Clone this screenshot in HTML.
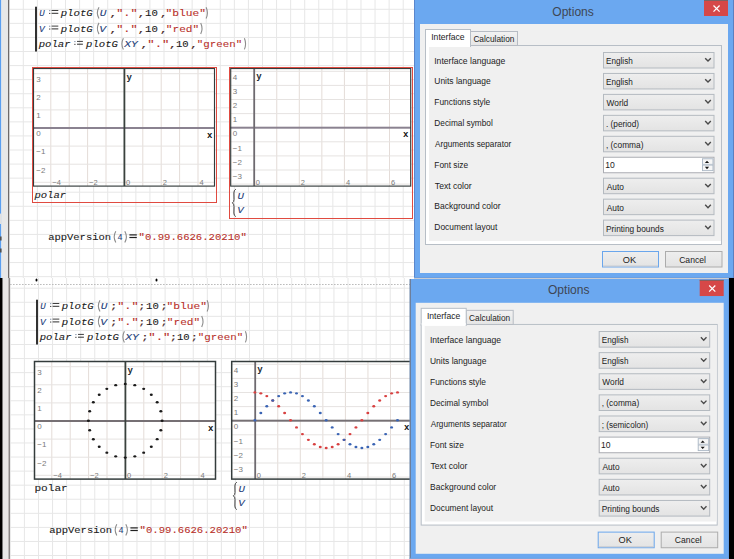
<!DOCTYPE html><html><head><meta charset="utf-8"><style>html,body{margin:0;padding:0;width:734px;height:559px;overflow:hidden;background:#fff}svg{position:absolute;left:0;top:0}</style></head><body>
<svg width="734" height="559" viewBox="0 0 734 559" style="shape-rendering:auto">
<defs><clipPath id="ctop"><rect x="0" y="0" width="734" height="278"/></clipPath><clipPath id="cbot"><rect x="0" y="278" width="734" height="281"/></clipPath></defs>
<g clip-path="url(#ctop)">
<rect x="0" y="0" width="734" height="278" fill="#fff"/>
<rect x="8.73" y="0" width="1" height="278" fill="#e7e7e7"/>
<rect x="22.80" y="0" width="1" height="278" fill="#e7e7e7"/>
<rect x="36.87" y="0" width="1" height="278" fill="#e7e7e7"/>
<rect x="50.94" y="0" width="1" height="278" fill="#e7e7e7"/>
<rect x="65.01" y="0" width="1" height="278" fill="#e7e7e7"/>
<rect x="79.08" y="0" width="1" height="278" fill="#e7e7e7"/>
<rect x="93.15" y="0" width="1" height="278" fill="#e7e7e7"/>
<rect x="107.22" y="0" width="1" height="278" fill="#e7e7e7"/>
<rect x="121.29" y="0" width="1" height="278" fill="#e7e7e7"/>
<rect x="135.36" y="0" width="1" height="278" fill="#e7e7e7"/>
<rect x="149.43" y="0" width="1" height="278" fill="#e7e7e7"/>
<rect x="163.50" y="0" width="1" height="278" fill="#e7e7e7"/>
<rect x="177.57" y="0" width="1" height="278" fill="#e7e7e7"/>
<rect x="191.64" y="0" width="1" height="278" fill="#e7e7e7"/>
<rect x="205.71" y="0" width="1" height="278" fill="#e7e7e7"/>
<rect x="219.78" y="0" width="1" height="278" fill="#e7e7e7"/>
<rect x="233.85" y="0" width="1" height="278" fill="#e7e7e7"/>
<rect x="247.92" y="0" width="1" height="278" fill="#e7e7e7"/>
<rect x="261.99" y="0" width="1" height="278" fill="#e7e7e7"/>
<rect x="276.06" y="0" width="1" height="278" fill="#e7e7e7"/>
<rect x="290.13" y="0" width="1" height="278" fill="#e7e7e7"/>
<rect x="304.20" y="0" width="1" height="278" fill="#e7e7e7"/>
<rect x="318.27" y="0" width="1" height="278" fill="#e7e7e7"/>
<rect x="332.34" y="0" width="1" height="278" fill="#e7e7e7"/>
<rect x="346.41" y="0" width="1" height="278" fill="#e7e7e7"/>
<rect x="360.48" y="0" width="1" height="278" fill="#e7e7e7"/>
<rect x="374.55" y="0" width="1" height="278" fill="#e7e7e7"/>
<rect x="388.62" y="0" width="1" height="278" fill="#e7e7e7"/>
<rect x="402.69" y="0" width="1" height="278" fill="#e7e7e7"/>
<rect x="416.76" y="0" width="1" height="278" fill="#e7e7e7"/>
<rect x="430.83" y="0" width="1" height="278" fill="#e7e7e7"/>
<rect x="444.90" y="0" width="1" height="278" fill="#e7e7e7"/>
<rect x="458.97" y="0" width="1" height="278" fill="#e7e7e7"/>
<rect x="473.04" y="0" width="1" height="278" fill="#e7e7e7"/>
<rect x="487.11" y="0" width="1" height="278" fill="#e7e7e7"/>
<rect x="501.18" y="0" width="1" height="278" fill="#e7e7e7"/>
<rect x="515.25" y="0" width="1" height="278" fill="#e7e7e7"/>
<rect x="529.32" y="0" width="1" height="278" fill="#e7e7e7"/>
<rect x="543.39" y="0" width="1" height="278" fill="#e7e7e7"/>
<rect x="557.46" y="0" width="1" height="278" fill="#e7e7e7"/>
<rect x="571.53" y="0" width="1" height="278" fill="#e7e7e7"/>
<rect x="585.60" y="0" width="1" height="278" fill="#e7e7e7"/>
<rect x="599.67" y="0" width="1" height="278" fill="#e7e7e7"/>
<rect x="613.74" y="0" width="1" height="278" fill="#e7e7e7"/>
<rect x="627.81" y="0" width="1" height="278" fill="#e7e7e7"/>
<rect x="641.88" y="0" width="1" height="278" fill="#e7e7e7"/>
<rect x="655.95" y="0" width="1" height="278" fill="#e7e7e7"/>
<rect x="670.02" y="0" width="1" height="278" fill="#e7e7e7"/>
<rect x="684.09" y="0" width="1" height="278" fill="#e7e7e7"/>
<rect x="698.16" y="0" width="1" height="278" fill="#e7e7e7"/>
<rect x="712.23" y="0" width="1" height="278" fill="#e7e7e7"/>
<rect x="726.30" y="0" width="1" height="278" fill="#e7e7e7"/>
<rect x="9" y="8.80" width="725" height="1" fill="#e7e7e7"/>
<rect x="9" y="22.87" width="725" height="1" fill="#e7e7e7"/>
<rect x="9" y="36.94" width="725" height="1" fill="#e7e7e7"/>
<rect x="9" y="51.01" width="725" height="1" fill="#e7e7e7"/>
<rect x="9" y="65.08" width="725" height="1" fill="#e7e7e7"/>
<rect x="9" y="79.15" width="725" height="1" fill="#e7e7e7"/>
<rect x="9" y="93.22" width="725" height="1" fill="#e7e7e7"/>
<rect x="9" y="107.29" width="725" height="1" fill="#e7e7e7"/>
<rect x="9" y="121.36" width="725" height="1" fill="#e7e7e7"/>
<rect x="9" y="135.43" width="725" height="1" fill="#e7e7e7"/>
<rect x="9" y="149.50" width="725" height="1" fill="#e7e7e7"/>
<rect x="9" y="163.57" width="725" height="1" fill="#e7e7e7"/>
<rect x="9" y="177.64" width="725" height="1" fill="#e7e7e7"/>
<rect x="9" y="191.71" width="725" height="1" fill="#e7e7e7"/>
<rect x="9" y="205.78" width="725" height="1" fill="#e7e7e7"/>
<rect x="9" y="219.85" width="725" height="1" fill="#e7e7e7"/>
<rect x="9" y="233.92" width="725" height="1" fill="#e7e7e7"/>
<rect x="9" y="247.99" width="725" height="1" fill="#e7e7e7"/>
<rect x="9" y="262.06" width="725" height="1" fill="#e7e7e7"/>
<rect x="9" y="276.13" width="725" height="1" fill="#e7e7e7"/>
<rect x="0" y="0" width="1.4" height="278" fill="#5b9ff0"/><rect x="1.4" y="0" width="6.6" height="278" fill="#e8e8e8"/><rect x="8" y="0" width="1.2" height="278" fill="#6e6a6a"/>
<rect x="0" y="213.6" width="1.4" height="10.4" fill="#e0e0e0"/><rect x="0" y="236.5" width="1.6" height="4" fill="#505050"/><rect x="0" y="248.5" width="1.6" height="4" fill="#505050"/>
<rect x="35.2" y="6.7" width="1.6" height="44.8" fill="#000"/>
<text x="39.24" y="15.90" font-family="Liberation Mono" font-size="8.8" fill="#24407a" font-style="italic" stroke="#24407a" stroke-width="0.08" textLength="5.47" lengthAdjust="spacingAndGlyphs">U</text>
<rect x="49.10" y="10.10" width="1.2" height="1.1" fill="#8090a8"/><rect x="49.10" y="12.90" width="1.2" height="1.1" fill="#404040"/>
<rect x="51.60" y="10.00" width="6.70" height="1.0" fill="#404040"/><rect x="51.60" y="12.80" width="6.70" height="1.0" fill="#303030"/>
<text x="60.70" y="15.90" font-family="Liberation Mono" font-size="8.8" fill="#202020" font-style="italic" stroke="#202020" stroke-width="0.08" textLength="32.12" lengthAdjust="spacingAndGlyphs">plotG</text>
<path d="M99.00 7.30 Q95.70 12.90 99.00 18.50" fill="none" stroke="#8c8c8c" stroke-width="1.1"/>
<text x="99.75" y="15.90" font-family="Liberation Mono" font-size="8.8" fill="#24407a" font-style="italic" stroke="#24407a" stroke-width="0.08" textLength="6.64" lengthAdjust="spacingAndGlyphs">U</text>
<text x="109.18" y="15.90" font-family="Liberation Mono" font-size="8.8" fill="#4a2a2a" stroke="#4a2a2a" stroke-width="0.08" textLength="8.40" lengthAdjust="spacingAndGlyphs">,</text>
<text x="116.23" y="15.90" font-family="Liberation Mono" font-size="8.8" fill="#b8302a" stroke="#b8302a" stroke-width="0.08" textLength="21.44" lengthAdjust="spacingAndGlyphs">"."</text>
<text x="137.55" y="15.90" font-family="Liberation Mono" font-size="8.8" fill="#4a2a2a" stroke="#4a2a2a" stroke-width="0.08" textLength="8.10" lengthAdjust="spacingAndGlyphs">,</text>
<text x="145.05" y="15.90" font-family="Liberation Mono" font-size="8.8" fill="#202020" stroke="#202020" stroke-width="0.08" textLength="12.79" lengthAdjust="spacingAndGlyphs">10</text>
<text x="159.75" y="15.90" font-family="Liberation Mono" font-size="8.8" fill="#4a2a2a" stroke="#4a2a2a" stroke-width="0.08" textLength="8.10" lengthAdjust="spacingAndGlyphs">,</text>
<text x="165.63" y="15.90" font-family="Liberation Mono" font-size="8.8" fill="#b8302a" stroke="#b8302a" stroke-width="0.08" textLength="40.34" lengthAdjust="spacingAndGlyphs">"blue"</text>
<path d="M206.10 7.30 Q208.70 12.90 206.10 18.50" fill="none" stroke="#8c8c8c" stroke-width="1.1"/>
<text x="38.94" y="31.50" font-family="Liberation Mono" font-size="8.8" fill="#24407a" font-style="italic" stroke="#24407a" stroke-width="0.08" textLength="5.70" lengthAdjust="spacingAndGlyphs">V</text>
<rect x="49.10" y="25.70" width="1.2" height="1.1" fill="#8090a8"/><rect x="49.10" y="28.50" width="1.2" height="1.1" fill="#404040"/>
<rect x="51.60" y="25.60" width="6.70" height="1.0" fill="#404040"/><rect x="51.60" y="28.40" width="6.70" height="1.0" fill="#303030"/>
<text x="60.70" y="31.50" font-family="Liberation Mono" font-size="8.8" fill="#202020" font-style="italic" stroke="#202020" stroke-width="0.08" textLength="32.12" lengthAdjust="spacingAndGlyphs">plotG</text>
<path d="M99.00 22.90 Q95.70 28.50 99.00 34.10" fill="none" stroke="#8c8c8c" stroke-width="1.1"/>
<text x="99.39" y="31.50" font-family="Liberation Mono" font-size="8.8" fill="#24407a" font-style="italic" stroke="#24407a" stroke-width="0.08" textLength="6.82" lengthAdjust="spacingAndGlyphs">V</text>
<text x="109.18" y="31.50" font-family="Liberation Mono" font-size="8.8" fill="#4a2a2a" stroke="#4a2a2a" stroke-width="0.08" textLength="8.40" lengthAdjust="spacingAndGlyphs">,</text>
<text x="116.23" y="31.50" font-family="Liberation Mono" font-size="8.8" fill="#b8302a" stroke="#b8302a" stroke-width="0.08" textLength="21.44" lengthAdjust="spacingAndGlyphs">"."</text>
<text x="137.55" y="31.50" font-family="Liberation Mono" font-size="8.8" fill="#4a2a2a" stroke="#4a2a2a" stroke-width="0.08" textLength="8.10" lengthAdjust="spacingAndGlyphs">,</text>
<text x="145.05" y="31.50" font-family="Liberation Mono" font-size="8.8" fill="#202020" stroke="#202020" stroke-width="0.08" textLength="12.79" lengthAdjust="spacingAndGlyphs">10</text>
<text x="159.75" y="31.50" font-family="Liberation Mono" font-size="8.8" fill="#4a2a2a" stroke="#4a2a2a" stroke-width="0.08" textLength="8.10" lengthAdjust="spacingAndGlyphs">,</text>
<text x="165.84" y="31.50" font-family="Liberation Mono" font-size="8.8" fill="#b8302a" stroke="#b8302a" stroke-width="0.08" textLength="33.43" lengthAdjust="spacingAndGlyphs">"red"</text>
<path d="M200.70 22.90 Q203.30 28.50 200.70 34.10" fill="none" stroke="#8c8c8c" stroke-width="1.1"/>
<text x="38.70" y="46.80" font-family="Liberation Mono" font-size="8.8" fill="#202020" font-style="italic" stroke="#202020" stroke-width="0.08" textLength="31.93" lengthAdjust="spacingAndGlyphs">polar</text>
<rect x="74.30" y="41.00" width="1.2" height="1.1" fill="#8090a8"/><rect x="74.30" y="43.80" width="1.2" height="1.1" fill="#404040"/>
<rect x="77.00" y="40.90" width="5.90" height="1.0" fill="#404040"/><rect x="77.00" y="43.70" width="5.90" height="1.0" fill="#303030"/>
<text x="86.00" y="46.80" font-family="Liberation Mono" font-size="8.8" fill="#202020" font-style="italic" stroke="#202020" stroke-width="0.08" textLength="31.92" lengthAdjust="spacingAndGlyphs">plotG</text>
<path d="M123.40 38.20 Q120.40 43.80 123.40 49.40" fill="none" stroke="#8c8c8c" stroke-width="1.1"/>
<text x="124.34" y="46.80" font-family="Liberation Mono" font-size="8.8" fill="#24407a" font-style="italic" stroke="#24407a" stroke-width="0.08" textLength="13.50" lengthAdjust="spacingAndGlyphs">XY</text>
<text x="140.38" y="46.80" font-family="Liberation Mono" font-size="8.8" fill="#4a2a2a" stroke="#4a2a2a" stroke-width="0.08" textLength="8.40" lengthAdjust="spacingAndGlyphs">,</text>
<text x="147.28" y="46.80" font-family="Liberation Mono" font-size="8.8" fill="#b8302a" stroke="#b8302a" stroke-width="0.08" textLength="22.15" lengthAdjust="spacingAndGlyphs">"."</text>
<text x="168.88" y="46.80" font-family="Liberation Mono" font-size="8.8" fill="#4a2a2a" stroke="#4a2a2a" stroke-width="0.08" textLength="8.40" lengthAdjust="spacingAndGlyphs">,</text>
<text x="175.96" y="46.80" font-family="Liberation Mono" font-size="8.8" fill="#202020" stroke="#202020" stroke-width="0.08" textLength="12.68" lengthAdjust="spacingAndGlyphs">10</text>
<text x="189.94" y="46.80" font-family="Liberation Mono" font-size="8.8" fill="#4a2a2a" stroke="#4a2a2a" stroke-width="0.08" textLength="8.10" lengthAdjust="spacingAndGlyphs">,</text>
<text x="196.89" y="46.80" font-family="Liberation Mono" font-size="8.8" fill="#b8302a" stroke="#b8302a" stroke-width="0.08" textLength="45.33" lengthAdjust="spacingAndGlyphs">"green"</text>
<path d="M244.40 38.20 Q246.70 43.80 244.40 49.40" fill="none" stroke="#8c8c8c" stroke-width="1.1"/>
<rect x="33" y="68" width="182" height="118" fill="#fff"/>
<rect x="50.30" y="68" width="1" height="118" fill="#e4dcd8"/>
<rect x="68.70" y="68" width="1" height="118" fill="#e4dcd8"/>
<rect x="87.10" y="68" width="1" height="118" fill="#e4dcd8"/>
<rect x="105.50" y="68" width="1" height="118" fill="#e4dcd8"/>
<rect x="142.30" y="68" width="1" height="118" fill="#e4dcd8"/>
<rect x="160.70" y="68" width="1" height="118" fill="#e4dcd8"/>
<rect x="179.10" y="68" width="1" height="118" fill="#e4dcd8"/>
<rect x="197.50" y="68" width="1" height="118" fill="#e4dcd8"/>
<rect x="33" y="73.20" width="182" height="1" fill="#e6e3e1"/>
<rect x="33" y="91.30" width="182" height="1" fill="#e6e3e1"/>
<rect x="33" y="109.40" width="182" height="1" fill="#e6e3e1"/>
<rect x="33" y="145.60" width="182" height="1" fill="#e6e3e1"/>
<rect x="33" y="163.70" width="182" height="1" fill="#e6e3e1"/>
<rect x="33" y="181.80" width="182" height="1" fill="#e6e3e1"/>
<rect x="33" y="127.00" width="182" height="2" fill="#8a8290"/>
<rect x="123.50" y="68" width="1.8" height="118" fill="#3a423e"/>
<text x="36.3" y="81.99999999999999" font-family="Liberation Sans" font-size="8" fill="#7a7a7a">3</text>
<text x="36.3" y="100.1" font-family="Liberation Sans" font-size="8" fill="#7a7a7a">2</text>
<text x="36.3" y="118.2" font-family="Liberation Sans" font-size="8" fill="#7a7a7a">1</text>
<text x="36.3" y="136.3" font-family="Liberation Sans" font-size="8" fill="#7a7a7a">0</text>
<text x="36.3" y="154.4" font-family="Liberation Sans" font-size="8" fill="#7a7a7a">−1</text>
<text x="36.3" y="172.5" font-family="Liberation Sans" font-size="8" fill="#7a7a7a">−2</text>
<text x="52.30000000000001" y="185" font-family="Liberation Sans" font-size="7.5" fill="#7a7a7a">−4</text>
<text x="89.10000000000001" y="185" font-family="Liberation Sans" font-size="7.5" fill="#7a7a7a">−2</text>
<text x="125.9" y="185" font-family="Liberation Sans" font-size="7.5" fill="#7a7a7a">0</text>
<text x="162.7" y="185" font-family="Liberation Sans" font-size="7.5" fill="#7a7a7a">2</text>
<text x="199.5" y="185" font-family="Liberation Sans" font-size="7.5" fill="#7a7a7a">4</text>
<text x="126.4" y="80" font-family="Liberation Mono" font-size="9" fill="#202830" font-weight="bold">y</text>
<text x="207" y="137.5" font-family="Liberation Mono" font-size="9" fill="#101010" font-weight="bold">x</text>
<rect x="33.5" y="68.5" width="181" height="117.6" fill="none" stroke="#343c3c" stroke-width="1.15"/>
<rect x="230" y="68" width="181" height="118" fill="#fff"/>
<rect x="276.25" y="68" width="1" height="118" fill="#e4dcd8"/>
<rect x="298.80" y="68" width="1" height="118" fill="#e4dcd8"/>
<rect x="321.35" y="68" width="1" height="118" fill="#e4dcd8"/>
<rect x="343.90" y="68" width="1" height="118" fill="#e4dcd8"/>
<rect x="366.45" y="68" width="1" height="118" fill="#e4dcd8"/>
<rect x="389.00" y="68" width="1" height="118" fill="#e4dcd8"/>
<rect x="230" y="70.80" width="181" height="1" fill="#e6e3e1"/>
<rect x="230" y="84.90" width="181" height="1" fill="#e6e3e1"/>
<rect x="230" y="99.00" width="181" height="1" fill="#e6e3e1"/>
<rect x="230" y="113.10" width="181" height="1" fill="#e6e3e1"/>
<rect x="230" y="141.30" width="181" height="1" fill="#e6e3e1"/>
<rect x="230" y="155.40" width="181" height="1" fill="#e6e3e1"/>
<rect x="230" y="169.50" width="181" height="1" fill="#e6e3e1"/>
<rect x="230" y="183.60" width="181" height="1" fill="#e6e3e1"/>
<rect x="230" y="126.70" width="181" height="2" fill="#8a8290"/>
<rect x="253.30" y="68" width="1.8" height="118" fill="#6e6a70"/>
<text x="232.8" y="80.00000000000001" font-family="Liberation Sans" font-size="8" fill="#7a7a7a">4</text>
<text x="232.8" y="94.10000000000001" font-family="Liberation Sans" font-size="8" fill="#7a7a7a">3</text>
<text x="232.8" y="108.2" font-family="Liberation Sans" font-size="8" fill="#7a7a7a">2</text>
<text x="232.8" y="122.30000000000001" font-family="Liberation Sans" font-size="8" fill="#7a7a7a">1</text>
<text x="232.8" y="136.4" font-family="Liberation Sans" font-size="8" fill="#7a7a7a">0</text>
<text x="232.8" y="150.5" font-family="Liberation Sans" font-size="8" fill="#7a7a7a">−1</text>
<text x="232.8" y="164.6" font-family="Liberation Sans" font-size="8" fill="#7a7a7a">−2</text>
<text x="232.8" y="178.7" font-family="Liberation Sans" font-size="8" fill="#7a7a7a">−3</text>
<text x="255.7" y="184.5" font-family="Liberation Sans" font-size="7.5" fill="#7a7a7a">0</text>
<text x="300.8" y="184.5" font-family="Liberation Sans" font-size="7.5" fill="#7a7a7a">2</text>
<text x="345.9" y="184.5" font-family="Liberation Sans" font-size="7.5" fill="#7a7a7a">4</text>
<text x="391.0" y="184.5" font-family="Liberation Sans" font-size="7.5" fill="#7a7a7a">6</text>
<text x="256.2" y="79" font-family="Liberation Mono" font-size="9" fill="#202830" font-weight="bold">y</text>
<text x="403" y="137.2" font-family="Liberation Mono" font-size="9" fill="#101010" font-weight="bold">x</text>
<rect x="230.7" y="68.5" width="180" height="117.6" fill="none" stroke="#343c3c" stroke-width="1.15"/>
<rect x="32.5" y="67.5" width="184" height="135" fill="none" stroke="#e04a40" stroke-width="1"/>
<rect x="229.5" y="67.5" width="183" height="151" fill="none" stroke="#e04a40" stroke-width="1"/>
<text x="34.40" y="198.00" font-family="Liberation Mono" font-size="8.8" fill="#202020" font-style="italic" stroke="#202020" stroke-width="0.08" textLength="31.83" lengthAdjust="spacingAndGlyphs">polar</text>
<path transform="translate(0,0)" d="M235.8 189.2 Q233.8 190.2 233.9 193 L234 199.5 Q234 202 232.4 202.9 Q234 203.8 234 206.3 L233.9 213 Q233.8 215.6 235.8 216.6" fill="none" stroke="#3a3a3a" stroke-width="1"/>
<text x="237.46" y="198.50" font-family="Liberation Mono" font-size="8.8" fill="#24407a" font-style="italic" stroke="#24407a" stroke-width="0.08" textLength="6.43" lengthAdjust="spacingAndGlyphs">U</text>
<text x="237.15" y="212.50" font-family="Liberation Mono" font-size="8.8" fill="#24407a" font-style="italic" stroke="#24407a" stroke-width="0.08" textLength="6.41" lengthAdjust="spacingAndGlyphs">V</text>
<text x="48.17" y="239.70" font-family="Liberation Mono" font-size="8.8" fill="#202020" stroke="#202020" stroke-width="0.08" textLength="62.88" lengthAdjust="spacingAndGlyphs">appVersion</text>
<path d="M115.80 231.20 Q112.60 236.80 115.80 242.40" fill="none" stroke="#8c8c8c" stroke-width="1.1"/>
<text x="117.58" y="239.70" font-family="Liberation Mono" font-size="8.8" fill="#24407a" stroke="#24407a" stroke-width="0.08" textLength="5.04" lengthAdjust="spacingAndGlyphs">4</text>
<path d="M124.80 231.20 Q128.00 236.80 124.80 242.40" fill="none" stroke="#8c8c8c" stroke-width="1.1"/>
<rect x="129.40" y="234.30" width="7.4" height="1.2" fill="#202020"/><rect x="129.40" y="236.90" width="7.4" height="1.2" fill="#202020"/>
<text x="138.62" y="239.70" font-family="Liberation Mono" font-size="8.8" fill="#b8302a" stroke="#b8302a" stroke-width="0.08" textLength="108.18" lengthAdjust="spacingAndGlyphs">"0.99.6626.20210"</text>
</g>
<g clip-path="url(#cbot)">
<rect x="0" y="278" width="734" height="281" fill="#fff"/>
<rect x="9.83" y="278" width="1" height="281" fill="#e7e7e7"/>
<rect x="23.90" y="278" width="1" height="281" fill="#e7e7e7"/>
<rect x="37.97" y="278" width="1" height="281" fill="#e7e7e7"/>
<rect x="52.04" y="278" width="1" height="281" fill="#e7e7e7"/>
<rect x="66.11" y="278" width="1" height="281" fill="#e7e7e7"/>
<rect x="80.18" y="278" width="1" height="281" fill="#e7e7e7"/>
<rect x="94.25" y="278" width="1" height="281" fill="#e7e7e7"/>
<rect x="108.32" y="278" width="1" height="281" fill="#e7e7e7"/>
<rect x="122.39" y="278" width="1" height="281" fill="#e7e7e7"/>
<rect x="136.46" y="278" width="1" height="281" fill="#e7e7e7"/>
<rect x="150.53" y="278" width="1" height="281" fill="#e7e7e7"/>
<rect x="164.60" y="278" width="1" height="281" fill="#e7e7e7"/>
<rect x="178.67" y="278" width="1" height="281" fill="#e7e7e7"/>
<rect x="192.74" y="278" width="1" height="281" fill="#e7e7e7"/>
<rect x="206.81" y="278" width="1" height="281" fill="#e7e7e7"/>
<rect x="220.88" y="278" width="1" height="281" fill="#e7e7e7"/>
<rect x="234.95" y="278" width="1" height="281" fill="#e7e7e7"/>
<rect x="249.02" y="278" width="1" height="281" fill="#e7e7e7"/>
<rect x="263.09" y="278" width="1" height="281" fill="#e7e7e7"/>
<rect x="277.16" y="278" width="1" height="281" fill="#e7e7e7"/>
<rect x="291.23" y="278" width="1" height="281" fill="#e7e7e7"/>
<rect x="305.30" y="278" width="1" height="281" fill="#e7e7e7"/>
<rect x="319.37" y="278" width="1" height="281" fill="#e7e7e7"/>
<rect x="333.44" y="278" width="1" height="281" fill="#e7e7e7"/>
<rect x="347.51" y="278" width="1" height="281" fill="#e7e7e7"/>
<rect x="361.58" y="278" width="1" height="281" fill="#e7e7e7"/>
<rect x="375.65" y="278" width="1" height="281" fill="#e7e7e7"/>
<rect x="389.72" y="278" width="1" height="281" fill="#e7e7e7"/>
<rect x="403.79" y="278" width="1" height="281" fill="#e7e7e7"/>
<rect x="417.86" y="278" width="1" height="281" fill="#e7e7e7"/>
<rect x="431.93" y="278" width="1" height="281" fill="#e7e7e7"/>
<rect x="446.00" y="278" width="1" height="281" fill="#e7e7e7"/>
<rect x="460.07" y="278" width="1" height="281" fill="#e7e7e7"/>
<rect x="474.14" y="278" width="1" height="281" fill="#e7e7e7"/>
<rect x="488.21" y="278" width="1" height="281" fill="#e7e7e7"/>
<rect x="502.28" y="278" width="1" height="281" fill="#e7e7e7"/>
<rect x="516.35" y="278" width="1" height="281" fill="#e7e7e7"/>
<rect x="530.42" y="278" width="1" height="281" fill="#e7e7e7"/>
<rect x="544.49" y="278" width="1" height="281" fill="#e7e7e7"/>
<rect x="558.56" y="278" width="1" height="281" fill="#e7e7e7"/>
<rect x="572.63" y="278" width="1" height="281" fill="#e7e7e7"/>
<rect x="586.70" y="278" width="1" height="281" fill="#e7e7e7"/>
<rect x="600.77" y="278" width="1" height="281" fill="#e7e7e7"/>
<rect x="614.84" y="278" width="1" height="281" fill="#e7e7e7"/>
<rect x="628.91" y="278" width="1" height="281" fill="#e7e7e7"/>
<rect x="642.98" y="278" width="1" height="281" fill="#e7e7e7"/>
<rect x="657.05" y="278" width="1" height="281" fill="#e7e7e7"/>
<rect x="671.12" y="278" width="1" height="281" fill="#e7e7e7"/>
<rect x="685.19" y="278" width="1" height="281" fill="#e7e7e7"/>
<rect x="699.26" y="278" width="1" height="281" fill="#e7e7e7"/>
<rect x="713.33" y="278" width="1" height="281" fill="#e7e7e7"/>
<rect x="727.40" y="278" width="1" height="281" fill="#e7e7e7"/>
<rect x="10" y="287.70" width="724" height="1" fill="#e7e7e7"/>
<rect x="10" y="301.77" width="724" height="1" fill="#e7e7e7"/>
<rect x="10" y="315.84" width="724" height="1" fill="#e7e7e7"/>
<rect x="10" y="329.91" width="724" height="1" fill="#e7e7e7"/>
<rect x="10" y="343.98" width="724" height="1" fill="#e7e7e7"/>
<rect x="10" y="358.05" width="724" height="1" fill="#e7e7e7"/>
<rect x="10" y="372.12" width="724" height="1" fill="#e7e7e7"/>
<rect x="10" y="386.19" width="724" height="1" fill="#e7e7e7"/>
<rect x="10" y="400.26" width="724" height="1" fill="#e7e7e7"/>
<rect x="10" y="414.33" width="724" height="1" fill="#e7e7e7"/>
<rect x="10" y="428.40" width="724" height="1" fill="#e7e7e7"/>
<rect x="10" y="442.47" width="724" height="1" fill="#e7e7e7"/>
<rect x="10" y="456.54" width="724" height="1" fill="#e7e7e7"/>
<rect x="10" y="470.61" width="724" height="1" fill="#e7e7e7"/>
<rect x="10" y="484.68" width="724" height="1" fill="#e7e7e7"/>
<rect x="10" y="498.75" width="724" height="1" fill="#e7e7e7"/>
<rect x="10" y="512.82" width="724" height="1" fill="#e7e7e7"/>
<rect x="10" y="526.89" width="724" height="1" fill="#e7e7e7"/>
<rect x="10" y="540.96" width="724" height="1" fill="#e7e7e7"/>
<rect x="10" y="555.03" width="724" height="1" fill="#e7e7e7"/>
<rect x="0" y="278" width="2.7" height="281" fill="#000"/><rect x="2.7" y="278" width="5.9" height="281" fill="#e8e8e8"/><rect x="8.6" y="278" width="1.2" height="281" fill="#6e6a6a"/>
<line x1="10" y1="284.5" x2="734" y2="284.5" stroke="#bcbcbc" stroke-width="1" stroke-dasharray="1.6 1.4"/>
<ellipse cx="36.5" cy="280" rx="1" ry="1.5" fill="#000"/><ellipse cx="156.5" cy="280" rx="1" ry="1.5" fill="#000"/>
<rect x="36.2" y="299.7" width="1.6" height="44.8" fill="#000"/>
<text x="40.24" y="308.90" font-family="Liberation Mono" font-size="8.8" fill="#24407a" font-style="italic" stroke="#24407a" stroke-width="0.08" textLength="5.47" lengthAdjust="spacingAndGlyphs">U</text>
<rect x="50.10" y="303.10" width="1.2" height="1.1" fill="#8090a8"/><rect x="50.10" y="305.90" width="1.2" height="1.1" fill="#404040"/>
<rect x="52.60" y="303.00" width="6.70" height="1.0" fill="#404040"/><rect x="52.60" y="305.80" width="6.70" height="1.0" fill="#303030"/>
<text x="61.70" y="308.90" font-family="Liberation Mono" font-size="8.8" fill="#202020" font-style="italic" stroke="#202020" stroke-width="0.08" textLength="32.12" lengthAdjust="spacingAndGlyphs">plotG</text>
<path d="M100.00 300.30 Q96.70 305.90 100.00 311.50" fill="none" stroke="#8c8c8c" stroke-width="1.1"/>
<text x="100.75" y="308.90" font-family="Liberation Mono" font-size="8.8" fill="#24407a" font-style="italic" stroke="#24407a" stroke-width="0.08" textLength="6.64" lengthAdjust="spacingAndGlyphs">U</text>
<text x="109.73" y="308.90" font-family="Liberation Mono" font-size="8.8" fill="#4a2a2a" stroke="#4a2a2a" stroke-width="0.08" textLength="8.00" lengthAdjust="spacingAndGlyphs">;</text>
<text x="117.23" y="308.90" font-family="Liberation Mono" font-size="8.8" fill="#b8302a" stroke="#b8302a" stroke-width="0.08" textLength="21.44" lengthAdjust="spacingAndGlyphs">"."</text>
<text x="138.11" y="308.90" font-family="Liberation Mono" font-size="8.8" fill="#4a2a2a" stroke="#4a2a2a" stroke-width="0.08" textLength="7.72" lengthAdjust="spacingAndGlyphs">;</text>
<text x="146.05" y="308.90" font-family="Liberation Mono" font-size="8.8" fill="#202020" stroke="#202020" stroke-width="0.08" textLength="12.79" lengthAdjust="spacingAndGlyphs">10</text>
<text x="160.31" y="308.90" font-family="Liberation Mono" font-size="8.8" fill="#4a2a2a" stroke="#4a2a2a" stroke-width="0.08" textLength="7.72" lengthAdjust="spacingAndGlyphs">;</text>
<text x="166.63" y="308.90" font-family="Liberation Mono" font-size="8.8" fill="#b8302a" stroke="#b8302a" stroke-width="0.08" textLength="40.34" lengthAdjust="spacingAndGlyphs">"blue"</text>
<path d="M207.10 300.30 Q209.70 305.90 207.10 311.50" fill="none" stroke="#8c8c8c" stroke-width="1.1"/>
<text x="39.94" y="324.50" font-family="Liberation Mono" font-size="8.8" fill="#24407a" font-style="italic" stroke="#24407a" stroke-width="0.08" textLength="5.70" lengthAdjust="spacingAndGlyphs">V</text>
<rect x="50.10" y="318.70" width="1.2" height="1.1" fill="#8090a8"/><rect x="50.10" y="321.50" width="1.2" height="1.1" fill="#404040"/>
<rect x="52.60" y="318.60" width="6.70" height="1.0" fill="#404040"/><rect x="52.60" y="321.40" width="6.70" height="1.0" fill="#303030"/>
<text x="61.70" y="324.50" font-family="Liberation Mono" font-size="8.8" fill="#202020" font-style="italic" stroke="#202020" stroke-width="0.08" textLength="32.12" lengthAdjust="spacingAndGlyphs">plotG</text>
<path d="M100.00 315.90 Q96.70 321.50 100.00 327.10" fill="none" stroke="#8c8c8c" stroke-width="1.1"/>
<text x="100.39" y="324.50" font-family="Liberation Mono" font-size="8.8" fill="#24407a" font-style="italic" stroke="#24407a" stroke-width="0.08" textLength="6.82" lengthAdjust="spacingAndGlyphs">V</text>
<text x="109.73" y="324.50" font-family="Liberation Mono" font-size="8.8" fill="#4a2a2a" stroke="#4a2a2a" stroke-width="0.08" textLength="8.00" lengthAdjust="spacingAndGlyphs">;</text>
<text x="117.23" y="324.50" font-family="Liberation Mono" font-size="8.8" fill="#b8302a" stroke="#b8302a" stroke-width="0.08" textLength="21.44" lengthAdjust="spacingAndGlyphs">"."</text>
<text x="138.11" y="324.50" font-family="Liberation Mono" font-size="8.8" fill="#4a2a2a" stroke="#4a2a2a" stroke-width="0.08" textLength="7.72" lengthAdjust="spacingAndGlyphs">;</text>
<text x="146.05" y="324.50" font-family="Liberation Mono" font-size="8.8" fill="#202020" stroke="#202020" stroke-width="0.08" textLength="12.79" lengthAdjust="spacingAndGlyphs">10</text>
<text x="160.31" y="324.50" font-family="Liberation Mono" font-size="8.8" fill="#4a2a2a" stroke="#4a2a2a" stroke-width="0.08" textLength="7.72" lengthAdjust="spacingAndGlyphs">;</text>
<text x="166.84" y="324.50" font-family="Liberation Mono" font-size="8.8" fill="#b8302a" stroke="#b8302a" stroke-width="0.08" textLength="33.43" lengthAdjust="spacingAndGlyphs">"red"</text>
<path d="M201.70 315.90 Q204.30 321.50 201.70 327.10" fill="none" stroke="#8c8c8c" stroke-width="1.1"/>
<text x="39.70" y="339.80" font-family="Liberation Mono" font-size="8.8" fill="#202020" font-style="italic" stroke="#202020" stroke-width="0.08" textLength="31.93" lengthAdjust="spacingAndGlyphs">polar</text>
<rect x="75.30" y="334.00" width="1.2" height="1.1" fill="#8090a8"/><rect x="75.30" y="336.80" width="1.2" height="1.1" fill="#404040"/>
<rect x="78.00" y="333.90" width="5.90" height="1.0" fill="#404040"/><rect x="78.00" y="336.70" width="5.90" height="1.0" fill="#303030"/>
<text x="87.00" y="339.80" font-family="Liberation Mono" font-size="8.8" fill="#202020" font-style="italic" stroke="#202020" stroke-width="0.08" textLength="31.92" lengthAdjust="spacingAndGlyphs">plotG</text>
<path d="M124.40 331.20 Q121.40 336.80 124.40 342.40" fill="none" stroke="#8c8c8c" stroke-width="1.1"/>
<text x="125.34" y="339.80" font-family="Liberation Mono" font-size="8.8" fill="#24407a" font-style="italic" stroke="#24407a" stroke-width="0.08" textLength="13.50" lengthAdjust="spacingAndGlyphs">XY</text>
<text x="140.93" y="339.80" font-family="Liberation Mono" font-size="8.8" fill="#4a2a2a" stroke="#4a2a2a" stroke-width="0.08" textLength="8.00" lengthAdjust="spacingAndGlyphs">;</text>
<text x="148.28" y="339.80" font-family="Liberation Mono" font-size="8.8" fill="#b8302a" stroke="#b8302a" stroke-width="0.08" textLength="22.15" lengthAdjust="spacingAndGlyphs">"."</text>
<text x="169.43" y="339.80" font-family="Liberation Mono" font-size="8.8" fill="#4a2a2a" stroke="#4a2a2a" stroke-width="0.08" textLength="8.00" lengthAdjust="spacingAndGlyphs">;</text>
<text x="176.96" y="339.80" font-family="Liberation Mono" font-size="8.8" fill="#202020" stroke="#202020" stroke-width="0.08" textLength="12.68" lengthAdjust="spacingAndGlyphs">10</text>
<text x="190.51" y="339.80" font-family="Liberation Mono" font-size="8.8" fill="#4a2a2a" stroke="#4a2a2a" stroke-width="0.08" textLength="7.72" lengthAdjust="spacingAndGlyphs">;</text>
<text x="197.89" y="339.80" font-family="Liberation Mono" font-size="8.8" fill="#b8302a" stroke="#b8302a" stroke-width="0.08" textLength="45.33" lengthAdjust="spacingAndGlyphs">"green"</text>
<path d="M245.40 331.20 Q247.70 336.80 245.40 342.40" fill="none" stroke="#8c8c8c" stroke-width="1.1"/>
<rect x="34" y="361" width="182" height="118" fill="#fff"/>
<rect x="51.30" y="361" width="1" height="118" fill="#e4dcd8"/>
<rect x="69.70" y="361" width="1" height="118" fill="#e4dcd8"/>
<rect x="88.10" y="361" width="1" height="118" fill="#e4dcd8"/>
<rect x="106.50" y="361" width="1" height="118" fill="#e4dcd8"/>
<rect x="143.30" y="361" width="1" height="118" fill="#e4dcd8"/>
<rect x="161.70" y="361" width="1" height="118" fill="#e4dcd8"/>
<rect x="180.10" y="361" width="1" height="118" fill="#e4dcd8"/>
<rect x="198.50" y="361" width="1" height="118" fill="#e4dcd8"/>
<rect x="34" y="366.20" width="182" height="1" fill="#e6e3e1"/>
<rect x="34" y="384.30" width="182" height="1" fill="#e6e3e1"/>
<rect x="34" y="402.40" width="182" height="1" fill="#e6e3e1"/>
<rect x="34" y="438.60" width="182" height="1" fill="#e6e3e1"/>
<rect x="34" y="456.70" width="182" height="1" fill="#e6e3e1"/>
<rect x="34" y="474.80" width="182" height="1" fill="#e6e3e1"/>
<rect x="34" y="420.00" width="182" height="2" fill="#767074"/>
<rect x="124.50" y="361" width="1.8" height="118" fill="#3a423e"/>
<text x="37.3" y="375.0" font-family="Liberation Sans" font-size="8" fill="#7a7a7a">3</text>
<text x="37.3" y="393.1" font-family="Liberation Sans" font-size="8" fill="#7a7a7a">2</text>
<text x="37.3" y="411.2" font-family="Liberation Sans" font-size="8" fill="#7a7a7a">1</text>
<text x="37.3" y="429.3" font-family="Liberation Sans" font-size="8" fill="#7a7a7a">0</text>
<text x="37.3" y="447.40000000000003" font-family="Liberation Sans" font-size="8" fill="#7a7a7a">−1</text>
<text x="37.3" y="465.5" font-family="Liberation Sans" font-size="8" fill="#7a7a7a">−2</text>
<text x="53.30000000000001" y="478" font-family="Liberation Sans" font-size="7.5" fill="#7a7a7a">−4</text>
<text x="90.10000000000001" y="478" font-family="Liberation Sans" font-size="7.5" fill="#7a7a7a">−2</text>
<text x="126.9" y="478" font-family="Liberation Sans" font-size="7.5" fill="#7a7a7a">0</text>
<text x="163.7" y="478" font-family="Liberation Sans" font-size="7.5" fill="#7a7a7a">2</text>
<text x="200.5" y="478" font-family="Liberation Sans" font-size="7.5" fill="#7a7a7a">4</text>
<text x="127.4" y="373" font-family="Liberation Mono" font-size="9" fill="#202830" font-weight="bold">y</text>
<text x="208" y="430.5" font-family="Liberation Mono" font-size="9" fill="#101010" font-weight="bold">x</text>
<ellipse cx="125.25" cy="383.90" rx="1.5" ry="1.2" fill="#1a1a1a"/>
<ellipse cx="134.79" cy="385.16" rx="1.5" ry="1.2" fill="#1a1a1a"/>
<ellipse cx="143.68" cy="388.84" rx="1.5" ry="1.2" fill="#1a1a1a"/>
<ellipse cx="151.31" cy="394.69" rx="1.5" ry="1.2" fill="#1a1a1a"/>
<ellipse cx="157.16" cy="402.32" rx="1.5" ry="1.2" fill="#1a1a1a"/>
<ellipse cx="160.84" cy="411.21" rx="1.5" ry="1.2" fill="#1a1a1a"/>
<ellipse cx="162.10" cy="420.75" rx="1.5" ry="1.2" fill="#1a1a1a"/>
<ellipse cx="160.84" cy="430.29" rx="1.5" ry="1.2" fill="#1a1a1a"/>
<ellipse cx="157.16" cy="439.17" rx="1.5" ry="1.2" fill="#1a1a1a"/>
<ellipse cx="151.31" cy="446.81" rx="1.5" ry="1.2" fill="#1a1a1a"/>
<ellipse cx="143.68" cy="452.66" rx="1.5" ry="1.2" fill="#1a1a1a"/>
<ellipse cx="134.79" cy="456.34" rx="1.5" ry="1.2" fill="#1a1a1a"/>
<ellipse cx="125.25" cy="457.60" rx="1.5" ry="1.2" fill="#1a1a1a"/>
<ellipse cx="115.71" cy="456.34" rx="1.5" ry="1.2" fill="#1a1a1a"/>
<ellipse cx="106.82" cy="452.66" rx="1.5" ry="1.2" fill="#1a1a1a"/>
<ellipse cx="99.19" cy="446.81" rx="1.5" ry="1.2" fill="#1a1a1a"/>
<ellipse cx="93.34" cy="439.18" rx="1.5" ry="1.2" fill="#1a1a1a"/>
<ellipse cx="89.66" cy="430.29" rx="1.5" ry="1.2" fill="#1a1a1a"/>
<ellipse cx="88.40" cy="420.75" rx="1.5" ry="1.2" fill="#1a1a1a"/>
<ellipse cx="89.66" cy="411.21" rx="1.5" ry="1.2" fill="#1a1a1a"/>
<ellipse cx="93.34" cy="402.32" rx="1.5" ry="1.2" fill="#1a1a1a"/>
<ellipse cx="99.19" cy="394.69" rx="1.5" ry="1.2" fill="#1a1a1a"/>
<ellipse cx="106.82" cy="388.84" rx="1.5" ry="1.2" fill="#1a1a1a"/>
<ellipse cx="115.71" cy="385.16" rx="1.5" ry="1.2" fill="#1a1a1a"/>
<rect x="34.5" y="361.5" width="181" height="117.6" fill="none" stroke="#343c3c" stroke-width="1.5"/>
<rect x="231" y="361" width="181" height="118" fill="#fff"/>
<rect x="277.25" y="361" width="1" height="118" fill="#e4dcd8"/>
<rect x="299.80" y="361" width="1" height="118" fill="#e4dcd8"/>
<rect x="322.35" y="361" width="1" height="118" fill="#e4dcd8"/>
<rect x="344.90" y="361" width="1" height="118" fill="#e4dcd8"/>
<rect x="367.45" y="361" width="1" height="118" fill="#e4dcd8"/>
<rect x="390.00" y="361" width="1" height="118" fill="#e4dcd8"/>
<rect x="231" y="363.80" width="181" height="1" fill="#e6e3e1"/>
<rect x="231" y="377.90" width="181" height="1" fill="#e6e3e1"/>
<rect x="231" y="392.00" width="181" height="1" fill="#e6e3e1"/>
<rect x="231" y="406.10" width="181" height="1" fill="#e6e3e1"/>
<rect x="231" y="434.30" width="181" height="1" fill="#e6e3e1"/>
<rect x="231" y="448.40" width="181" height="1" fill="#e6e3e1"/>
<rect x="231" y="462.50" width="181" height="1" fill="#e6e3e1"/>
<rect x="231" y="476.60" width="181" height="1" fill="#e6e3e1"/>
<rect x="231" y="419.70" width="181" height="2" fill="#767074"/>
<rect x="254.30" y="361" width="1.8" height="118" fill="#6e6a70"/>
<text x="233.8" y="373.0" font-family="Liberation Sans" font-size="8" fill="#7a7a7a">4</text>
<text x="233.8" y="387.09999999999997" font-family="Liberation Sans" font-size="8" fill="#7a7a7a">3</text>
<text x="233.8" y="401.2" font-family="Liberation Sans" font-size="8" fill="#7a7a7a">2</text>
<text x="233.8" y="415.29999999999995" font-family="Liberation Sans" font-size="8" fill="#7a7a7a">1</text>
<text x="233.8" y="429.4" font-family="Liberation Sans" font-size="8" fill="#7a7a7a">0</text>
<text x="233.8" y="443.5" font-family="Liberation Sans" font-size="8" fill="#7a7a7a">−1</text>
<text x="233.8" y="457.59999999999997" font-family="Liberation Sans" font-size="8" fill="#7a7a7a">−2</text>
<text x="233.8" y="471.7" font-family="Liberation Sans" font-size="8" fill="#7a7a7a">−3</text>
<text x="256.7" y="477.5" font-family="Liberation Sans" font-size="7.5" fill="#7a7a7a">0</text>
<text x="301.8" y="477.5" font-family="Liberation Sans" font-size="7.5" fill="#7a7a7a">2</text>
<text x="346.9" y="477.5" font-family="Liberation Sans" font-size="7.5" fill="#7a7a7a">4</text>
<text x="392.0" y="477.5" font-family="Liberation Sans" font-size="7.5" fill="#7a7a7a">6</text>
<text x="257.2" y="372" font-family="Liberation Mono" font-size="9" fill="#202830" font-weight="bold">y</text>
<text x="404" y="430.2" font-family="Liberation Mono" font-size="9" fill="#101010" font-weight="bold">x</text>
<ellipse cx="254.90" cy="392.40" rx="1.5" ry="1.2" fill="#d84040"/>
<ellipse cx="254.90" cy="420.20" rx="1.5" ry="1.2" fill="#3a64b4"/>
<ellipse cx="260.84" cy="393.35" rx="1.5" ry="1.2" fill="#d84040"/>
<ellipse cx="260.84" cy="413.00" rx="1.5" ry="1.2" fill="#3a64b4"/>
<ellipse cx="266.79" cy="396.12" rx="1.5" ry="1.2" fill="#d84040"/>
<ellipse cx="266.79" cy="406.30" rx="1.5" ry="1.2" fill="#3a64b4"/>
<ellipse cx="272.73" cy="400.54" rx="1.5" ry="1.2" fill="#d84040"/>
<ellipse cx="272.73" cy="400.54" rx="1.5" ry="1.2" fill="#3a64b4"/>
<ellipse cx="278.67" cy="406.30" rx="1.5" ry="1.2" fill="#d84040"/>
<ellipse cx="278.67" cy="396.12" rx="1.5" ry="1.2" fill="#3a64b4"/>
<ellipse cx="284.61" cy="413.00" rx="1.5" ry="1.2" fill="#d84040"/>
<ellipse cx="284.61" cy="393.35" rx="1.5" ry="1.2" fill="#3a64b4"/>
<ellipse cx="290.56" cy="420.20" rx="1.5" ry="1.2" fill="#d84040"/>
<ellipse cx="290.56" cy="392.40" rx="1.5" ry="1.2" fill="#3a64b4"/>
<ellipse cx="296.50" cy="427.40" rx="1.5" ry="1.2" fill="#d84040"/>
<ellipse cx="296.50" cy="393.35" rx="1.5" ry="1.2" fill="#3a64b4"/>
<ellipse cx="302.44" cy="434.10" rx="1.5" ry="1.2" fill="#d84040"/>
<ellipse cx="302.44" cy="396.12" rx="1.5" ry="1.2" fill="#3a64b4"/>
<ellipse cx="308.39" cy="439.86" rx="1.5" ry="1.2" fill="#d84040"/>
<ellipse cx="308.39" cy="400.54" rx="1.5" ry="1.2" fill="#3a64b4"/>
<ellipse cx="314.33" cy="444.28" rx="1.5" ry="1.2" fill="#d84040"/>
<ellipse cx="314.33" cy="406.30" rx="1.5" ry="1.2" fill="#3a64b4"/>
<ellipse cx="320.27" cy="447.05" rx="1.5" ry="1.2" fill="#d84040"/>
<ellipse cx="320.27" cy="413.00" rx="1.5" ry="1.2" fill="#3a64b4"/>
<ellipse cx="326.21" cy="448.00" rx="1.5" ry="1.2" fill="#d84040"/>
<ellipse cx="326.21" cy="420.20" rx="1.5" ry="1.2" fill="#3a64b4"/>
<ellipse cx="332.16" cy="447.05" rx="1.5" ry="1.2" fill="#d84040"/>
<ellipse cx="332.16" cy="427.40" rx="1.5" ry="1.2" fill="#3a64b4"/>
<ellipse cx="338.10" cy="444.28" rx="1.5" ry="1.2" fill="#d84040"/>
<ellipse cx="338.10" cy="434.10" rx="1.5" ry="1.2" fill="#3a64b4"/>
<ellipse cx="344.04" cy="439.86" rx="1.5" ry="1.2" fill="#d84040"/>
<ellipse cx="344.04" cy="439.86" rx="1.5" ry="1.2" fill="#3a64b4"/>
<ellipse cx="349.99" cy="434.10" rx="1.5" ry="1.2" fill="#d84040"/>
<ellipse cx="349.99" cy="444.28" rx="1.5" ry="1.2" fill="#3a64b4"/>
<ellipse cx="355.93" cy="427.40" rx="1.5" ry="1.2" fill="#d84040"/>
<ellipse cx="355.93" cy="447.05" rx="1.5" ry="1.2" fill="#3a64b4"/>
<ellipse cx="361.87" cy="420.20" rx="1.5" ry="1.2" fill="#d84040"/>
<ellipse cx="361.87" cy="448.00" rx="1.5" ry="1.2" fill="#3a64b4"/>
<ellipse cx="367.81" cy="413.00" rx="1.5" ry="1.2" fill="#d84040"/>
<ellipse cx="367.81" cy="447.05" rx="1.5" ry="1.2" fill="#3a64b4"/>
<ellipse cx="373.76" cy="406.30" rx="1.5" ry="1.2" fill="#d84040"/>
<ellipse cx="373.76" cy="444.28" rx="1.5" ry="1.2" fill="#3a64b4"/>
<ellipse cx="379.70" cy="400.54" rx="1.5" ry="1.2" fill="#d84040"/>
<ellipse cx="379.70" cy="439.86" rx="1.5" ry="1.2" fill="#3a64b4"/>
<ellipse cx="385.64" cy="396.12" rx="1.5" ry="1.2" fill="#d84040"/>
<ellipse cx="385.64" cy="434.10" rx="1.5" ry="1.2" fill="#3a64b4"/>
<ellipse cx="391.59" cy="393.35" rx="1.5" ry="1.2" fill="#d84040"/>
<ellipse cx="391.59" cy="427.40" rx="1.5" ry="1.2" fill="#3a64b4"/>
<ellipse cx="397.53" cy="392.40" rx="1.5" ry="1.2" fill="#d84040"/>
<ellipse cx="397.53" cy="420.20" rx="1.5" ry="1.2" fill="#3a64b4"/>
<rect x="231.7" y="361.5" width="180" height="117.6" fill="none" stroke="#343c3c" stroke-width="1.5"/>
<text x="34.40" y="491.00" font-family="Liberation Mono" font-size="8.8" fill="#202020" stroke="#202020" stroke-width="0.08" textLength="33.41" lengthAdjust="spacingAndGlyphs">polar</text>
<path transform="translate(1,293)" d="M235.8 189.2 Q233.8 190.2 233.9 193 L234 199.5 Q234 202 232.4 202.9 Q234 203.8 234 206.3 L233.9 213 Q233.8 215.6 235.8 216.6" fill="none" stroke="#3a3a3a" stroke-width="1"/>
<text x="238.46" y="491.50" font-family="Liberation Mono" font-size="8.8" fill="#24407a" font-style="italic" stroke="#24407a" stroke-width="0.08" textLength="6.43" lengthAdjust="spacingAndGlyphs">U</text>
<text x="238.15" y="505.50" font-family="Liberation Mono" font-size="8.8" fill="#24407a" font-style="italic" stroke="#24407a" stroke-width="0.08" textLength="6.41" lengthAdjust="spacingAndGlyphs">V</text>
<text x="49.17" y="532.70" font-family="Liberation Mono" font-size="8.8" fill="#202020" stroke="#202020" stroke-width="0.08" textLength="62.88" lengthAdjust="spacingAndGlyphs">appVersion</text>
<path d="M116.80 524.20 Q113.60 529.80 116.80 535.40" fill="none" stroke="#8c8c8c" stroke-width="1.1"/>
<text x="118.58" y="532.70" font-family="Liberation Mono" font-size="8.8" fill="#24407a" stroke="#24407a" stroke-width="0.08" textLength="5.04" lengthAdjust="spacingAndGlyphs">4</text>
<path d="M125.80 524.20 Q129.00 529.80 125.80 535.40" fill="none" stroke="#8c8c8c" stroke-width="1.1"/>
<rect x="130.40" y="527.30" width="7.4" height="1.2" fill="#202020"/><rect x="130.40" y="529.90" width="7.4" height="1.2" fill="#202020"/>
<text x="139.62" y="532.70" font-family="Liberation Mono" font-size="8.8" fill="#b8302a" stroke="#b8302a" stroke-width="0.08" textLength="108.18" lengthAdjust="spacingAndGlyphs">"0.99.6626.20210"</text>
</g>
</svg>
<svg width="734" height="559" style="position:absolute;left:0;top:0"><g transform="translate(0,0) scale(1,1)">
<defs><linearGradient id="dd" x1="0" y1="0" x2="0" y2="1"><stop offset="0" stop-color="#eeeeee"/><stop offset="1" stop-color="#e3e3e3"/></linearGradient><linearGradient id="tb" x1="0" y1="0" x2="0" y2="1"><stop offset="0" stop-color="#f2f2f2"/><stop offset="1" stop-color="#e6e6e6"/></linearGradient></defs>
<rect x="414" y="-1" width="320" height="290" fill="#6ba8f0"/>
<rect x="414" y="-1" width="1" height="290" fill="#5a86cc"/>
<rect x="733" y="-1" width="1" height="279" fill="#5a80c0"/>
<rect x="414" y="277" width="319" height="1" fill="#6a9ee0"/><rect x="414" y="278" width="319" height="1" fill="#c8ccd4"/>
<text x="552.30" y="15.70" font-family="Liberation Sans" font-size="12" fill="#3e4654" textLength="41.54" lengthAdjust="spacingAndGlyphs">Options</text>
<g transform="translate(0,0)"><rect x="704" y="0" width="24" height="16" fill="#d64848"/><rect x="704" y="0" width="24" height="1" fill="#7d6262"/>
<path d="M713.5 5.5 L719.6 11.6 M719.6 5.5 L713.5 11.6" stroke="#fff" stroke-width="1.25"/></g>
<rect x="420" y="24" width="308" height="249" fill="#f0f0f0"/>
<rect x="425.5" y="45.5" width="296" height="199" fill="#fff" stroke="#b7bec6" stroke-width="1"/>
<rect x="429" y="46" width="292" height="195" fill="#f0f0f0"/>
<rect x="470.5" y="31.5" width="47" height="14" fill="url(#tb)" stroke="#b7bcc4" stroke-width="1"/>
<rect x="425.5" y="29.5" width="45" height="17" fill="#fff" stroke="#b7bec6" stroke-width="1"/>
<rect x="426" y="44" width="44" height="3" fill="#fff"/>
<text x="431.23" y="40.20" font-family="Liberation Sans" font-size="9.6" fill="#1c1c1c" textLength="33.43" lengthAdjust="spacingAndGlyphs">Interface</text>
<text x="473.38" y="41.70" font-family="Liberation Sans" font-size="9.6" fill="#1c1c1c" textLength="41.07" lengthAdjust="spacingAndGlyphs">Calculation</text>
<text x="434.23" y="63.50" font-family="Liberation Sans" font-size="9.6" fill="#1c1c1c" textLength="71.15" lengthAdjust="spacingAndGlyphs">Interface language</text>
<rect x="603.5" y="52.50" width="110.5" height="15.5" fill="url(#dd)" stroke="#b4bac0" stroke-width="1"/>
<path d="M705.2 58.20 L708 61.10 L710.8 58.20" fill="none" stroke="#4a4a4a" stroke-width="1.4"/>
<text x="606.05" y="64.00" font-family="Liberation Sans" font-size="9.6" fill="#1c1c1c" textLength="26.72" lengthAdjust="spacingAndGlyphs">English</text>
<text x="434.32" y="84.35" font-family="Liberation Sans" font-size="9.6" fill="#1c1c1c" textLength="56.43" lengthAdjust="spacingAndGlyphs">Units language</text>
<rect x="603.5" y="73.45" width="110.5" height="15.5" fill="url(#dd)" stroke="#b4bac0" stroke-width="1"/>
<path d="M705.2 79.15 L708 82.05 L710.8 79.15" fill="none" stroke="#4a4a4a" stroke-width="1.4"/>
<text x="606.05" y="84.95" font-family="Liberation Sans" font-size="9.6" fill="#1c1c1c" textLength="26.72" lengthAdjust="spacingAndGlyphs">English</text>
<text x="434.33" y="105.20" font-family="Liberation Sans" font-size="9.6" fill="#1c1c1c" textLength="55.89" lengthAdjust="spacingAndGlyphs">Functions style</text>
<rect x="603.5" y="94.40" width="110.5" height="15.5" fill="url(#dd)" stroke="#b4bac0" stroke-width="1"/>
<path d="M705.2 100.10 L708 103.00 L710.8 100.10" fill="none" stroke="#4a4a4a" stroke-width="1.4"/>
<text x="606.62" y="105.90" font-family="Liberation Sans" font-size="9.6" fill="#1c1c1c" textLength="21.61" lengthAdjust="spacingAndGlyphs">World</text>
<text x="434.34" y="126.05" font-family="Liberation Sans" font-size="9.6" fill="#1c1c1c" textLength="58.42" lengthAdjust="spacingAndGlyphs">Decimal symbol</text>
<rect x="603.5" y="115.35" width="110.5" height="15.5" fill="url(#dd)" stroke="#b4bac0" stroke-width="1"/>
<path d="M705.2 121.05 L708 123.95 L710.8 121.05" fill="none" stroke="#4a4a4a" stroke-width="1.4"/>
<text x="605.95" y="126.85" font-family="Liberation Sans" font-size="9.6" fill="#1c1c1c" textLength="33.16" lengthAdjust="spacingAndGlyphs">. (period)</text>
<text x="435.00" y="146.90" font-family="Liberation Sans" font-size="9.6" fill="#1c1c1c" textLength="76.15" lengthAdjust="spacingAndGlyphs">Arguments separator</text>
<rect x="603.5" y="136.30" width="110.5" height="15.5" fill="url(#dd)" stroke="#b4bac0" stroke-width="1"/>
<path d="M705.2 142.00 L708 144.90 L710.8 142.00" fill="none" stroke="#4a4a4a" stroke-width="1.4"/>
<text x="605.95" y="147.80" font-family="Liberation Sans" font-size="9.6" fill="#1c1c1c" textLength="37.55" lengthAdjust="spacingAndGlyphs">, (comma)</text>
<text x="434.33" y="167.75" font-family="Liberation Sans" font-size="9.6" fill="#1c1c1c" textLength="33.76" lengthAdjust="spacingAndGlyphs">Font size</text>
<rect x="603.5" y="157.25" width="110.5" height="15.5" fill="#fff" stroke="#abadb3" stroke-width="1"/>
<rect x="702.5" y="158.75" width="10.5" height="5.6" fill="#f6f6f6" stroke="#a9b6c4" stroke-width="0.9"/>
<rect x="702.5" y="165.05" width="10.5" height="5.6" fill="#f6f6f6" stroke="#a9b6c4" stroke-width="0.9"/>
<rect x="702.9" y="164.35" width="9.7" height="0.8" fill="#c8d0d8"/>
<path d="M704.9 162.95 L707 160.65 L709.1 162.95 Z M704.9 166.85 L707 169.15 L709.1 166.85 Z" fill="#141414"/>
<text x="605.31" y="168.15" font-family="Liberation Sans" font-size="9.6" fill="#1c1c1c" textLength="9.55" lengthAdjust="spacingAndGlyphs">10</text>
<text x="434.83" y="188.60" font-family="Liberation Sans" font-size="9.6" fill="#1c1c1c" textLength="36.84" lengthAdjust="spacingAndGlyphs">Text color</text>
<rect x="603.5" y="178.20" width="110.5" height="15.5" fill="url(#dd)" stroke="#b4bac0" stroke-width="1"/>
<path d="M705.2 183.90 L708 186.80 L710.8 183.90" fill="none" stroke="#4a4a4a" stroke-width="1.4"/>
<text x="606.70" y="189.70" font-family="Liberation Sans" font-size="9.6" fill="#1c1c1c" textLength="17.19" lengthAdjust="spacingAndGlyphs">Auto</text>
<text x="434.32" y="209.45" font-family="Liberation Sans" font-size="9.6" fill="#1c1c1c" textLength="66.19" lengthAdjust="spacingAndGlyphs">Background color</text>
<rect x="603.5" y="199.15" width="110.5" height="15.5" fill="url(#dd)" stroke="#b4bac0" stroke-width="1"/>
<path d="M705.2 204.85 L708 207.75 L710.8 204.85" fill="none" stroke="#4a4a4a" stroke-width="1.4"/>
<text x="606.70" y="210.65" font-family="Liberation Sans" font-size="9.6" fill="#1c1c1c" textLength="17.19" lengthAdjust="spacingAndGlyphs">Auto</text>
<text x="434.33" y="230.30" font-family="Liberation Sans" font-size="9.6" fill="#1c1c1c" textLength="63.00" lengthAdjust="spacingAndGlyphs">Document layout</text>
<rect x="603.5" y="220.10" width="110.5" height="15.5" fill="url(#dd)" stroke="#b4bac0" stroke-width="1"/>
<path d="M705.2 225.80 L708 228.70 L710.8 225.80" fill="none" stroke="#4a4a4a" stroke-width="1.4"/>
<text x="606.03" y="231.60" font-family="Liberation Sans" font-size="9.6" fill="#1c1c1c" textLength="57.79" lengthAdjust="spacingAndGlyphs">Printing bounds</text>
<rect x="602.5" y="251.5" width="56" height="15.5" fill="url(#dd)" stroke="#6aa6ec" stroke-width="1"/>
<rect x="603" y="265.5" width="55" height="1" fill="#c8ccd2"/>
<text x="622.84" y="262.70" font-family="Liberation Sans" font-size="9.6" fill="#1c1c1c" textLength="13.30" lengthAdjust="spacingAndGlyphs">OK</text>
<rect x="665.5" y="251.5" width="56.5" height="15.5" fill="url(#dd)" stroke="#acacac" stroke-width="1"/>
<text x="679.17" y="262.70" font-family="Liberation Sans" font-size="9.6" fill="#1c1c1c" textLength="26.77" lengthAdjust="spacingAndGlyphs">Cancel</text>
</g></svg>
<svg width="734" height="559" style="position:absolute;left:0;top:0"><g transform="translate(-4.3,278.6) scale(1,1.008)">
<defs><linearGradient id="dd" x1="0" y1="0" x2="0" y2="1"><stop offset="0" stop-color="#eeeeee"/><stop offset="1" stop-color="#e3e3e3"/></linearGradient><linearGradient id="tb" x1="0" y1="0" x2="0" y2="1"><stop offset="0" stop-color="#f2f2f2"/><stop offset="1" stop-color="#e6e6e6"/></linearGradient></defs>
<rect x="414" y="0.4" width="320" height="290" fill="#6ba8f0"/>
<rect x="414" y="0.4" width="1" height="290" fill="#6e6e78"/>
<rect x="733" y="-1" width="1" height="279" fill="#5a80c0"/>
<rect x="414" y="277" width="319" height="1" fill="#6a9ee0"/><rect x="414" y="278" width="319" height="1" fill="#c8ccd4"/>
<text x="552.30" y="15.70" font-family="Liberation Sans" font-size="12" fill="#3e4654" textLength="41.54" lengthAdjust="spacingAndGlyphs">Options</text>
<g transform="translate(0,1.3)"><rect x="704" y="0" width="24" height="16" fill="#d64848"/><rect x="704" y="0" width="24" height="1" fill="#7d6262"/>
<path d="M713.5 5.5 L719.6 11.6 M719.6 5.5 L713.5 11.6" stroke="#fff" stroke-width="1.25"/></g>
<rect x="420" y="24" width="308" height="249" fill="#f0f0f0"/>
<rect x="425.5" y="45.5" width="296" height="199" fill="#fff" stroke="#b7bec6" stroke-width="1"/>
<rect x="429" y="46" width="292" height="195" fill="#f0f0f0"/>
<rect x="470.5" y="31.5" width="47" height="14" fill="url(#tb)" stroke="#b7bcc4" stroke-width="1"/>
<rect x="425.5" y="29.5" width="45" height="17" fill="#fff" stroke="#b7bec6" stroke-width="1"/>
<rect x="426" y="44" width="44" height="3" fill="#fff"/>
<text x="431.23" y="40.20" font-family="Liberation Sans" font-size="9.6" fill="#1c1c1c" textLength="33.43" lengthAdjust="spacingAndGlyphs">Interface</text>
<text x="473.38" y="41.70" font-family="Liberation Sans" font-size="9.6" fill="#1c1c1c" textLength="41.07" lengthAdjust="spacingAndGlyphs">Calculation</text>
<text x="434.23" y="63.50" font-family="Liberation Sans" font-size="9.6" fill="#1c1c1c" textLength="71.15" lengthAdjust="spacingAndGlyphs">Interface language</text>
<rect x="603.5" y="52.50" width="110.5" height="15.5" fill="url(#dd)" stroke="#b4bac0" stroke-width="1"/>
<path d="M705.2 58.20 L708 61.10 L710.8 58.20" fill="none" stroke="#4a4a4a" stroke-width="1.4"/>
<text x="606.05" y="64.00" font-family="Liberation Sans" font-size="9.6" fill="#1c1c1c" textLength="26.72" lengthAdjust="spacingAndGlyphs">English</text>
<text x="434.32" y="84.35" font-family="Liberation Sans" font-size="9.6" fill="#1c1c1c" textLength="56.43" lengthAdjust="spacingAndGlyphs">Units language</text>
<rect x="603.5" y="73.45" width="110.5" height="15.5" fill="url(#dd)" stroke="#b4bac0" stroke-width="1"/>
<path d="M705.2 79.15 L708 82.05 L710.8 79.15" fill="none" stroke="#4a4a4a" stroke-width="1.4"/>
<text x="606.05" y="84.95" font-family="Liberation Sans" font-size="9.6" fill="#1c1c1c" textLength="26.72" lengthAdjust="spacingAndGlyphs">English</text>
<text x="434.33" y="105.20" font-family="Liberation Sans" font-size="9.6" fill="#1c1c1c" textLength="55.89" lengthAdjust="spacingAndGlyphs">Functions style</text>
<rect x="603.5" y="94.40" width="110.5" height="15.5" fill="url(#dd)" stroke="#b4bac0" stroke-width="1"/>
<path d="M705.2 100.10 L708 103.00 L710.8 100.10" fill="none" stroke="#4a4a4a" stroke-width="1.4"/>
<text x="606.62" y="105.90" font-family="Liberation Sans" font-size="9.6" fill="#1c1c1c" textLength="21.61" lengthAdjust="spacingAndGlyphs">World</text>
<text x="434.34" y="126.05" font-family="Liberation Sans" font-size="9.6" fill="#1c1c1c" textLength="58.42" lengthAdjust="spacingAndGlyphs">Decimal symbol</text>
<rect x="603.5" y="115.35" width="110.5" height="15.5" fill="url(#dd)" stroke="#b4bac0" stroke-width="1"/>
<path d="M705.2 121.05 L708 123.95 L710.8 121.05" fill="none" stroke="#4a4a4a" stroke-width="1.4"/>
<text x="605.95" y="126.85" font-family="Liberation Sans" font-size="9.6" fill="#1c1c1c" textLength="37.55" lengthAdjust="spacingAndGlyphs">, (comma)</text>
<text x="435.00" y="146.90" font-family="Liberation Sans" font-size="9.6" fill="#1c1c1c" textLength="76.15" lengthAdjust="spacingAndGlyphs">Arguments separator</text>
<rect x="603.5" y="136.30" width="110.5" height="15.5" fill="url(#dd)" stroke="#b4bac0" stroke-width="1"/>
<path d="M705.2 142.00 L708 144.90 L710.8 142.00" fill="none" stroke="#4a4a4a" stroke-width="1.4"/>
<text x="605.97" y="147.80" font-family="Liberation Sans" font-size="9.6" fill="#1c1c1c" textLength="46.65" lengthAdjust="spacingAndGlyphs">; (semicolon)</text>
<text x="434.33" y="167.75" font-family="Liberation Sans" font-size="9.6" fill="#1c1c1c" textLength="33.76" lengthAdjust="spacingAndGlyphs">Font size</text>
<rect x="603.5" y="157.25" width="110.5" height="15.5" fill="#fff" stroke="#abadb3" stroke-width="1"/>
<rect x="702.5" y="158.75" width="10.5" height="5.6" fill="#f6f6f6" stroke="#a9b6c4" stroke-width="0.9"/>
<rect x="702.5" y="165.05" width="10.5" height="5.6" fill="#f6f6f6" stroke="#a9b6c4" stroke-width="0.9"/>
<rect x="702.9" y="164.35" width="9.7" height="0.8" fill="#c8d0d8"/>
<path d="M704.9 162.95 L707 160.65 L709.1 162.95 Z M704.9 166.85 L707 169.15 L709.1 166.85 Z" fill="#141414"/>
<text x="605.31" y="168.15" font-family="Liberation Sans" font-size="9.6" fill="#1c1c1c" textLength="9.55" lengthAdjust="spacingAndGlyphs">10</text>
<text x="434.83" y="188.60" font-family="Liberation Sans" font-size="9.6" fill="#1c1c1c" textLength="36.84" lengthAdjust="spacingAndGlyphs">Text color</text>
<rect x="603.5" y="178.20" width="110.5" height="15.5" fill="url(#dd)" stroke="#b4bac0" stroke-width="1"/>
<path d="M705.2 183.90 L708 186.80 L710.8 183.90" fill="none" stroke="#4a4a4a" stroke-width="1.4"/>
<text x="606.70" y="189.70" font-family="Liberation Sans" font-size="9.6" fill="#1c1c1c" textLength="17.19" lengthAdjust="spacingAndGlyphs">Auto</text>
<text x="434.32" y="209.45" font-family="Liberation Sans" font-size="9.6" fill="#1c1c1c" textLength="66.19" lengthAdjust="spacingAndGlyphs">Background color</text>
<rect x="603.5" y="199.15" width="110.5" height="15.5" fill="url(#dd)" stroke="#b4bac0" stroke-width="1"/>
<path d="M705.2 204.85 L708 207.75 L710.8 204.85" fill="none" stroke="#4a4a4a" stroke-width="1.4"/>
<text x="606.70" y="210.65" font-family="Liberation Sans" font-size="9.6" fill="#1c1c1c" textLength="17.19" lengthAdjust="spacingAndGlyphs">Auto</text>
<text x="434.33" y="230.30" font-family="Liberation Sans" font-size="9.6" fill="#1c1c1c" textLength="63.00" lengthAdjust="spacingAndGlyphs">Document layout</text>
<rect x="603.5" y="220.10" width="110.5" height="15.5" fill="url(#dd)" stroke="#b4bac0" stroke-width="1"/>
<path d="M705.2 225.80 L708 228.70 L710.8 225.80" fill="none" stroke="#4a4a4a" stroke-width="1.4"/>
<text x="606.03" y="231.60" font-family="Liberation Sans" font-size="9.6" fill="#1c1c1c" textLength="57.79" lengthAdjust="spacingAndGlyphs">Printing bounds</text>
<rect x="602.5" y="251.5" width="56" height="15.5" fill="url(#dd)" stroke="#6aa6ec" stroke-width="1"/>
<rect x="603" y="265.5" width="55" height="1" fill="#c8ccd2"/>
<text x="622.84" y="262.70" font-family="Liberation Sans" font-size="9.6" fill="#1c1c1c" textLength="13.30" lengthAdjust="spacingAndGlyphs">OK</text>
<rect x="665.5" y="251.5" width="56.5" height="15.5" fill="url(#dd)" stroke="#acacac" stroke-width="1"/>
<text x="679.17" y="262.70" font-family="Liberation Sans" font-size="9.6" fill="#1c1c1c" textLength="26.77" lengthAdjust="spacingAndGlyphs">Cancel</text>
</g></svg>
<div style="position:absolute;left:729px;top:278px;width:5px;height:281px;background:#000"></div>
</body></html>
